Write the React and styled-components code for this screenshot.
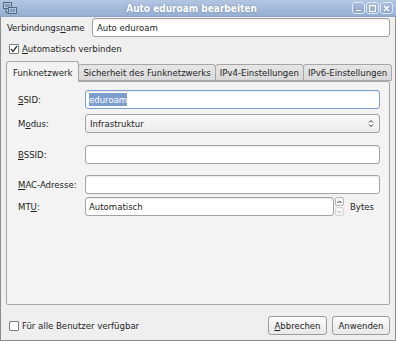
import React from "react";
import styled, { createGlobalStyle } from "styled-components";

const Global = createGlobalStyle`
  html, body { margin: 0; padding: 0; background: #efefef; }
  body { font-family: "DejaVu Sans Condensed", "DejaVu Sans", sans-serif; font-stretch: condensed; font-size: 9.5px; color: #1e1e1e; }
  * { box-sizing: border-box; }
`;

const Window = styled.div`
  width: 396px;
  height: 341px;
  display: flex;
  flex-direction: column;
  background: #efefef;
  border: 1px solid #8e8e8e;
  border-top: none;
`;

const TitleBar = styled.div`
  height: 17px;
  display: flex;
  align-items: center;
  padding: 0 3px 0 3px;
  background: linear-gradient(#b3c6e2, #96aed2);
  margin: 0 -1px;
  border-bottom: 1px solid #8fa5c6;
`;

const Title = styled.div`
  flex: 1;
  text-align: center;
  color: #fff;
  font-weight: bold;
  font-size: 10px;
  text-shadow: 0 0 2px #6d86ac;
  padding-left: 14px;
`;

const WinButtons = styled.div`
  display: flex;
  gap: 1px;
`;

const WinButton = styled.div`
  width: 13px;
  height: 12px;
  border: 1px solid #dfe8f4;
  border-radius: 3px;
  background: linear-gradient(#a9bedd, #8ea8cf);
  display: flex;
  align-items: center;
  justify-content: center;
`;

const Content = styled.div`
  flex: 1;
  display: flex;
  flex-direction: column;
  padding: 1px 5px 0 6px;
`;

const NameRow = styled.div`
  display: flex;
  align-items: center;
  height: 19px;
`;

const NameLabel = styled.div`
  width: 85px;
`;

const Field = styled.div`
  flex: 1;
  height: 19px;
  background: #fff;
  border: 1px solid ${(p) => (p.$focus ? "#7b9fd1" : "#a3a3a3")};
  border-radius: 3px;
  box-shadow: inset 0 1px 1px rgba(0,0,0,0.08);
  display: flex;
  align-items: center;
  padding-left: ${(p) => (p.$pad != null ? p.$pad : 4)}px;
  white-space: nowrap;
`;

const Selected = styled.span`
  background: #7c9ed0;
  color: #fff;
  padding: 1px 0;
`;

const CheckRow = styled.div`
  display: flex;
  align-items: center;
  gap: 3px;
  margin-top: ${(p) => p.$mt || 0}px;
  padding-left: 2px;
`;

const Box = styled.div`
  width: 10px;
  height: 10px;
  border: 1px solid #7c7c7c;
  border-radius: 1px;
  background: #fff;
  display: flex;
  align-items: center;
  justify-content: center;
`;

const Notebook = styled.div`
  margin-top: 7px;
  display: flex;
  flex-direction: column;
  margin-left: -1px;
`;

const Tabs = styled.div`
  display: flex;
  align-items: flex-end;
  height: 20px;
  padding-left: 0;
`;

const Tab = styled.div`
  height: ${(p) => (p.$active ? 21 : 17)}px;
  padding: 0 ${(p) => (p.$active ? 6 : 4)}px;
  display: flex;
  align-items: center;
  border: 1px solid #a6a6a6;
  border-bottom: ${(p) => (p.$active ? "none" : "1px solid #a6a6a6")};
  border-radius: 3px 3px 0 0;
  background: ${(p) => (p.$active ? "#f3f3f3" : "linear-gradient(#e6e6e6, #d9d9d9)")};
  margin-bottom: ${(p) => (p.$active ? -1 : 0)}px;
  position: relative;
  z-index: ${(p) => (p.$active ? 1 : 0)};
  margin-left: ${(p) => (p.$first ? 0 : -1)}px;
  white-space: nowrap;
`;

const Panel = styled.div`
  height: 224px;
  border: 1px solid #a6a6a6;
  border-radius: 0 2px 2px 2px;
  background: #f3f3f3;
  padding: 8px 9px 0 11px;
  display: flex;
  flex-direction: column;
`;

const FormRow = styled.div`
  display: flex;
  align-items: center;
  height: 19px;
  margin-top: ${(p) => p.$mt || 0}px;
`;

const FormLabel = styled.div`
  width: 67px;
`;

const U = styled.span`
  text-decoration: underline;
  text-underline-offset: 1px;
`;

const Combo = styled.div`
  flex: 1;
  height: 19px;
  border: 1px solid #a3a3a3;
  border-radius: 3px;
  background: linear-gradient(#fafafa, #ececec);
  display: flex;
  align-items: center;
  padding: 0 5px 0 4px;
  justify-content: space-between;
`;

const Spin = styled.div`
  flex: 1;
  display: flex;
  align-items: center;
`;

const SpinButtons = styled.div`
  width: 9px;
  height: 19px;
  margin-left: 1px;
  display: flex;
  flex-direction: column;
  gap: 1px;
`;

const SpinBtn = styled.div`
  flex: 1;
  border: 1px solid #b8b8b8;
  border-radius: 2px;
  background: #f5f5f5;
  display: flex;
  align-items: center;
  justify-content: center;
  opacity: ${(p) => (p.$dim ? 0.5 : 1)};
`;

const Unit = styled.div`
  margin-left: 6px;
  width: 30px;
`;

const Footer = styled.div`
  display: flex;
  align-items: center;
  margin-top: 11px;
  height: 19px;
`;

const Spacer = styled.div`
  flex: 1;
`;

const Button = styled.div`
  height: 19px;
  width: ${(p) => p.$w}px;
  margin-left: ${(p) => p.$ml || 0}px;
  border: 1px solid #9d9d9d;
  border-radius: 3px;
  background: linear-gradient(#fbfbfb, #e8e8e8);
  display: flex;
  align-items: center;
  justify-content: center;
`;

const Check = () => (
  <svg width="8" height="8" viewBox="0 0 8 8">
    <path d="M1 4 L3 6.5 L7 1" fill="none" stroke="#333" strokeWidth="1.3" />
  </svg>
);

const NetIcon = () => (
  <svg width="14" height="13" viewBox="0 0 14 13">
    <rect x="0.5" y="0.5" width="8" height="6" fill="#dfe6ef" stroke="#5a6a80" />
    <rect x="1.5" y="1.5" width="6" height="4" fill="#7e9cc4" />
    <rect x="5.5" y="5.5" width="8" height="6" fill="#dfe6ef" stroke="#5a6a80" />
    <rect x="6.5" y="6.5" width="6" height="4" fill="#7e9cc4" />
    <path d="M3 7 V11 H5" stroke="#5a6a80" fill="none" />
  </svg>
);

export default function App() {
  return (
    <>
      <Global />
      <Window>
        <TitleBar>
          <NetIcon />
          <Title>Auto eduroam bearbeiten</Title>
          <WinButtons>
            <WinButton>
              <svg width="7" height="7" viewBox="0 0 7 7"><rect x="0.5" y="4.5" width="6" height="2" fill="#fff" stroke="#6e87ad" strokeWidth="0.6" /></svg>
            </WinButton>
            <WinButton>
              <svg width="7" height="7" viewBox="0 0 7 7"><rect x="0.5" y="0.5" width="6" height="6" fill="none" stroke="#fff" strokeWidth="1.2" /></svg>
            </WinButton>
            <WinButton>
              <svg width="7" height="7" viewBox="0 0 7 7"><path d="M1 1 L6 6 M6 1 L1 6" stroke="#fff" strokeWidth="1.4" /></svg>
            </WinButton>
          </WinButtons>
        </TitleBar>
        <Content>
          <NameRow>
            <NameLabel>Verbindungs<U>n</U>ame</NameLabel>
            <Field>Auto eduroam</Field>
          </NameRow>
          <CheckRow $mt={6}>
            <Box><Check /></Box>
            <span><U>A</U>utomatisch verbinden</span>
          </CheckRow>
          <Notebook>
            <Tabs>
              <Tab $active $first>Funknetzwerk</Tab>
              <Tab>Sicherheit des Funknetzwerks</Tab>
              <Tab>IPv4-Einstellungen</Tab>
              <Tab>IPv6-Einstellungen</Tab>
            </Tabs>
            <Panel>
              <FormRow>
                <FormLabel><U>S</U>SID:</FormLabel>
                <Field $focus $pad={3}><Selected>eduroam</Selected></Field>
              </FormRow>
              <FormRow $mt={5}>
                <FormLabel>M<U>o</U>dus:</FormLabel>
                <Combo>
                  <span>Infrastruktur</span>
                  <svg width="6" height="9" viewBox="0 0 6 9">
                    <path d="M1 3.5 L3 1.5 L5 3.5 M1 5.5 L3 7.5 L5 5.5" fill="none" stroke="#333" strokeWidth="1" />
                  </svg>
                </Combo>
              </FormRow>
              <FormRow $mt={12}>
                <FormLabel><U>B</U>SSID:</FormLabel>
                <Field />
              </FormRow>
              <FormRow $mt={11}>
                <FormLabel><U>M</U>AC-Adresse:</FormLabel>
                <Field />
              </FormRow>
              <FormRow $mt={3}>
                <FormLabel>MT<U>U</U>:</FormLabel>
                <Spin>
                  <Field $pad={3}>Automatisch</Field>
                  <SpinButtons>
                    <SpinBtn>
                      <svg width="5" height="4" viewBox="0 0 5 4"><path d="M0.5 3 L2.5 1 L4.5 3" fill="none" stroke="#333" /></svg>
                    </SpinBtn>
                    <SpinBtn $dim>
                      <svg width="5" height="4" viewBox="0 0 5 4"><path d="M0.5 1 L2.5 3 L4.5 1" fill="none" stroke="#777" /></svg>
                    </SpinBtn>
                  </SpinButtons>
                  <Unit>Bytes</Unit>
                </Spin>
              </FormRow>
            </Panel>
          </Notebook>
          <Footer>
            <CheckRow>
              <Box />
              <span>Für alle Benutzer verfügbar</span>
            </CheckRow>
            <Spacer />
            <Button $w={59}><span><U>A</U>bbrechen</span></Button>
            <Button $w={58} $ml={5}>Anwenden</Button>
          </Footer>
        </Content>
      </Window>
    </>
  );
}
